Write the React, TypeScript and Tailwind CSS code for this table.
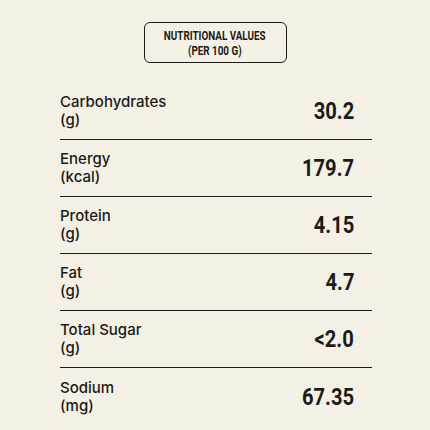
import React from "react";

const rows = [
  { name: "Carbohydrates", unit: "(g)", value: "30.2" },
  { name: "Energy", unit: "(kcal)", value: "179.7" },
  { name: "Protein", unit: "(g)", value: "4.15" },
  { name: "Fat", unit: "(g)", value: "4.7" },
  { name: "Total Sugar", unit: "(g)", value: "<2.0" },
  { name: "Sodium", unit: "(mg)", value: "67.35" },
];

const cond = { fontFamily: "Roboto, sans-serif" };

export default function App() {
  return (
    <div className="w-[430px] h-[430px] bg-[#f4f0e6] text-[#1b1b18] flex flex-col items-center overflow-hidden">
      <div
        className="mt-[22px] w-[143px] h-[41px] border-[1.5px] border-[#1b1b18] rounded-[6px] flex flex-col items-center justify-center text-[13.5px] font-bold leading-[15px] whitespace-nowrap"
        style={cond}
      >
        <span className="inline-block scale-x-[0.73]">NUTRITIONAL VALUES</span>
        <span className="inline-block scale-x-[0.73]">(PER 100 G)</span>
      </div>
      <div className="mt-[20px] w-[312px] ml-[2px] flex flex-col">
        {rows.map((r, i) => (
          <div
            key={r.name}
            className={`h-[57px] flex items-center justify-between pr-[18px] ${i < rows.length - 1 ? "border-b-[1.5px] border-[#1b1b18]" : ""}`}
          >
            <div className="flex flex-col text-[15px] leading-[18px] font-medium" style={{ fontFamily: "Inter, sans-serif" }}>
              <span>{r.name}</span>
              <span>{r.unit}</span>
            </div>
            <div className="text-[24px] font-bold leading-none inline-block origin-right scale-x-[0.84] whitespace-nowrap" style={cond}>
              {r.value}
            </div>
          </div>
        ))}
      </div>
    </div>
  );
}
